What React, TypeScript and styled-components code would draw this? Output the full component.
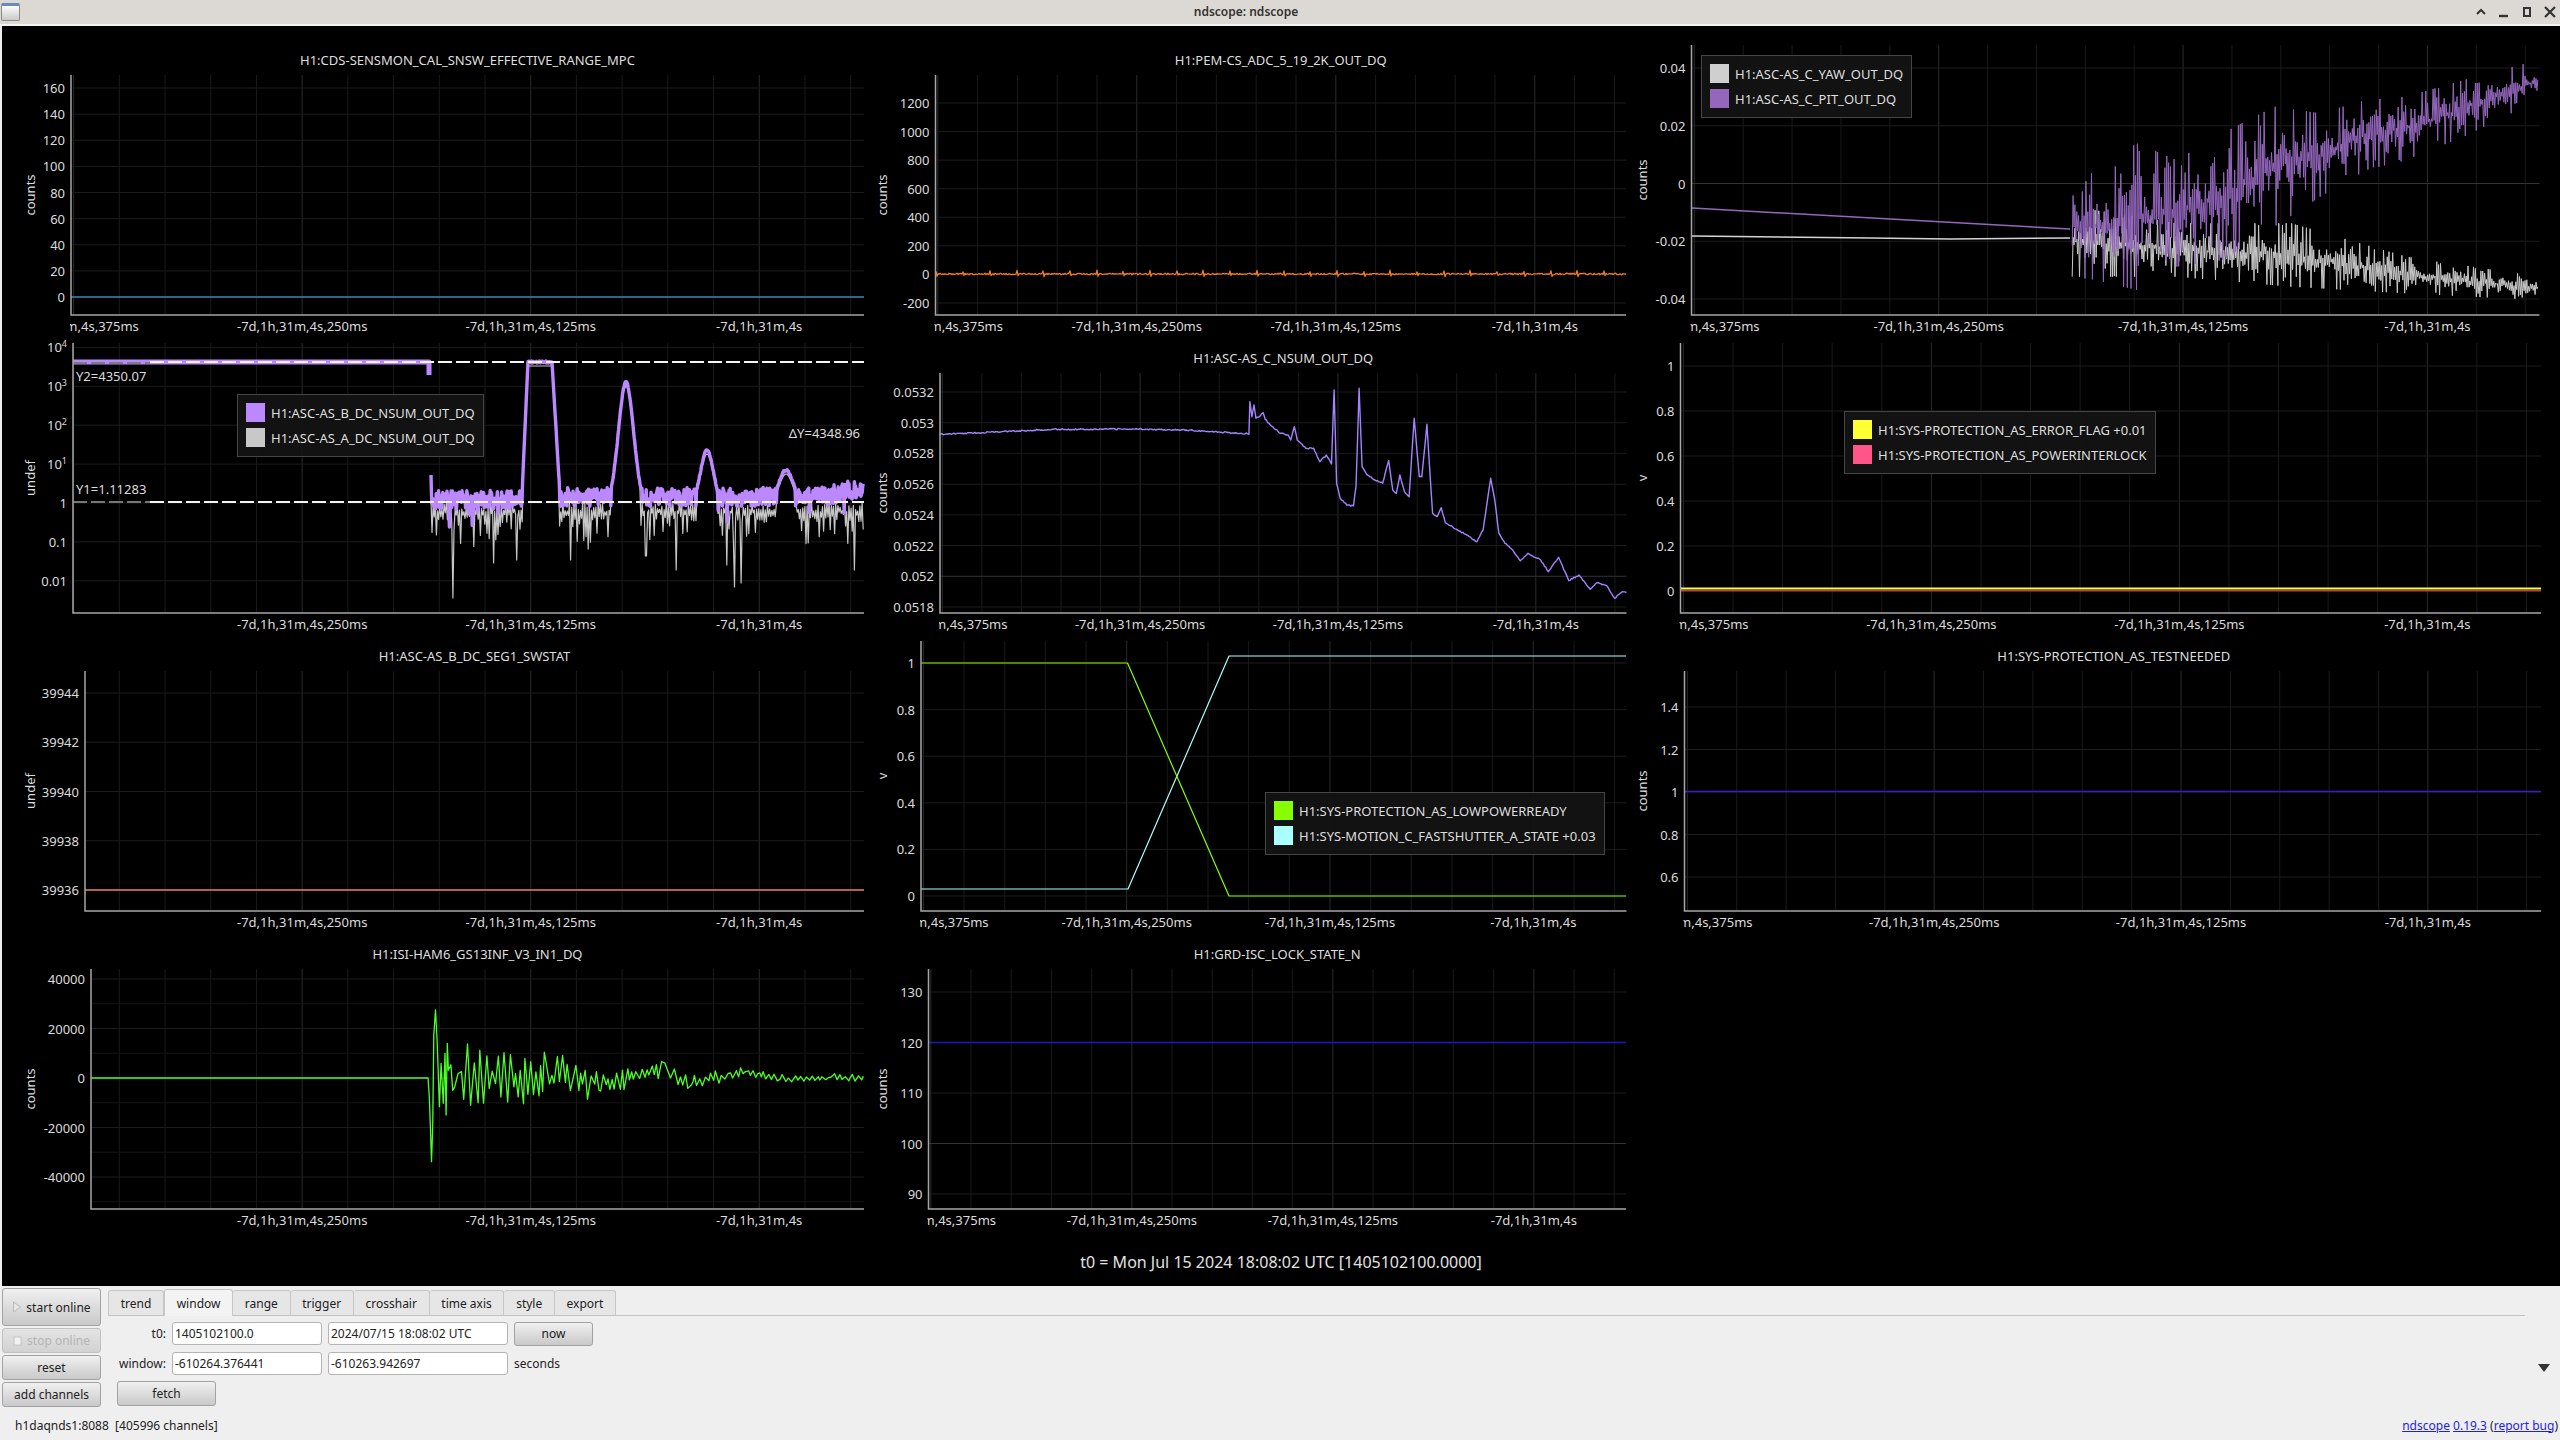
import React from 'react';
import styled, { createGlobalStyle } from 'styled-components';

type Pt = [number, number];

interface Trace {
  d: string;
  color: string;
  width?: number;
  dash?: string;
}

interface LegendDef {
  x: number;
  y: number;
  items: { color: string; label: string }[];
}

interface PlotDef {
  col: number;
  row: number;
  title?: string;
  left: number;
  right: number;
  unit: string;
  yPos: (v: number) => number;
  ticks: { value: number; label: React.ReactNode; accent?: boolean }[];
  minorY?: number[];
  hideFirstLabel?: boolean;
  traces: Trace[];
  legend?: LegendDef;
  notes?: { x: number; y: number; text: string; end?: boolean }[];
}

const COL_X = [2, 877, 1640];
const COL_W = [875, 763, 918];
const UNIT_X = [30, 882, 1642];
const ROW_H = 298;
const GRID_TOP = 40;
const WINDOW_MS = 433.744;

const rng = (seed: number) => () => {
  seed = (seed + 0x6d2b79f5) | 0;
  let t = Math.imul(seed ^ (seed >>> 15), 1 | seed);
  t = (t + Math.imul(t ^ (t >>> 7), 61 | t)) ^ t;
  return ((t ^ (t >>> 14)) >>> 0) / 4294967296;
};

const toPath = (pts: Pt[]) =>
  'M' + pts.map(([x, y]) => `${x.toFixed(1)} ${y.toFixed(1)}`).join('L');

const linear = (v1: number, p1: number, v2: number, p2: number) => (v: number) =>
  p1 + ((v - v1) * (p2 - p1)) / (v2 - v1);

// piecewise interpolation over [x, a, b, ...] rows
const lookup = (table: number[][], x: number, idx: number) => {
  if (x <= table[0][0]) return table[0][idx];
  for (let i = 1; i < table.length; i++) {
    if (x <= table[i][0]) {
      const f = (x - table[i - 1][0]) / (table[i][0] - table[i - 1][0]);
      return table[i - 1][idx] + f * (table[i][idx] - table[i - 1][idx]);
    }
  }
  return table[table.length - 1][idx];
};

const flat = (left: number, right: number, y: number): string => `M${left} ${y}L${right} ${y}`;

const zigzagBand = (seed: number, env: number[][], from: number, to: number, step: number, power: number) => {
  const r = rng(seed);
  const pts: Pt[] = [];
  let sign = 1;
  let burst = 1;
  let n = 0;
  for (let z = from; z <= to; z += step) {
    if (n++ % 6 === 0) burst = 0.35 + 0.65 * r();
    const top = lookup(env, z, 1) / 3;
    const bottom = lookup(env, z, 2) / 3;
    const mid = (top + bottom) / 2;
    const half = (bottom - top) / 2;
    const reach = r() < 0.12 ? 1 : burst * Math.pow(r(), power);
    pts.push([1660 + z / 1.742, mid + sign * half * reach]);
    sign = -sign;
  }
  return toPath(pts);
};

const pitTrace = () => {
  const env = [[720, 520, 830], [760, 520, 840], [830, 430, 870], [900, 480, 800], [980, 400, 780], [1070, 320, 680], [1150, 340, 590], [1230, 300, 510], [1300, 290, 480], [1400, 240, 410], [1530, 180, 300]];
  return zigzagBand(11, env, 718, 1530, 1.6, 1.1);
};

const yawTrace = () => {
  const env = [[720, 620, 830], [900, 670, 830], [1100, 670, 860], [1300, 770, 880], [1530, 830, 900]];
  return zigzagBand(23, env, 718, 1530, 1.6, 1);
};

const pemTrace = (left: number, right: number) => {
  const r = rng(5);
  const pts: Pt[] = [];
  for (let x = left; x <= right; x += 1) {
    const phase = (x - left) % 26.7;
    const spike = phase < 1 ? -3 : phase < 2 ? 2 : 0;
    pts.push([x, 274 + (r() - 0.5) * 1.6 + spike]);
  }
  return toPath(pts);
};

// peaks of the arm-power transient, in screen pixels; 999 away from a peak
const peakY = (x: number) => {
  const trapezoid = x < 522 || x > 560 ? 999 : x < 528 ? 495 - ((x - 522) / 6) * 133 : x > 552 ? 362 + ((x - 552) / 8) * 133 : 362;
  const bell = (c: number, w: number, top: number) => 505 - (505 - top) * Math.exp(-((x - c) ** 2) / (2 * w * w));
  const y = Math.min(trapezoid, bell(626, 7.5, 382), bell(707, 6.5, 450), bell(786, 7.5, 470));
  return y > 488 ? 999 : y;
};

const bPower = () => {
  const r = rng(31);
  const pts: Pt[] = [[431, 475], [431.5, 495]];
  for (let x = 432; x <= 864; x += 0.6) {
    const base = x > 820 ? 497 - ((x - 820) / 44) * 10 : x < 520 ? 500 : 497;
    let y = base + (r() - 0.5) * 19;
    if (x < 500 && r() < 0.07) y += 10 + r() * 26;
    else if (r() < 0.025) y += 8 + r() * 16;
    pts.push([x, Math.min(y, peakY(x) + (r() - 0.5) * 2)]);
  }
  return toPath(pts);
};

const aPower = () => {
  const r = rng(47);
  const deep: Pt[] = [[453, 598], [494, 563], [517, 560], [571, 560], [676, 570], [735, 587], [741, 583], [854, 570], [646, 556], [727, 565]];
  const pts: Pt[] = [[431, 500]];
  let sign = 1;
  for (let x = 432; x <= 864; x += 1.1) {
    const hit = deep.find(([dx]) => Math.abs(dx - x) < 0.6);
    let y = 512 + sign * 10 * r();
    if (sign > 0 && r() < 0.45) y += r() * 30;
    if (hit) y = hit[1];
    sign = -sign;
    pts.push([x, Math.min(y, peakY(x) + 4)]);
  }
  return toPath(pts);
};

const nsumTrace = () => {
  const raw: Pt[] = [[117, 283], [200, 278], [290, 271], [350, 268], [500, 267], [600, 270], [720, 281], [723, 283], [725, 185], [729, 230], [733, 195], [737, 235], [745, 228], [751, 218], [755, 238], [765, 255], [785, 280], [800, 285], [805, 300], [812, 260], [818, 300], [835, 325], [850, 325], [862, 365], [875, 345], [885, 372], [890, 150], [895, 430], [902, 475], [915, 495], [928, 498], [933, 440], [939, 145], [945, 380], [955, 405], [970, 420], [985, 430], [997, 362], [1005, 450], [1012, 460], [1019, 405], [1028, 455], [1037, 470], [1047, 235], [1057, 410], [1062, 410], [1072, 253], [1083, 520], [1092, 530], [1100, 503], [1108, 548], [1130, 568], [1150, 585], [1170, 605], [1182, 570], [1197, 415], [1205, 480], [1213, 580], [1225, 610], [1240, 630], [1255, 662], [1270, 640], [1295, 660], [1310, 695], [1330, 652], [1350, 722], [1370, 705], [1392, 748], [1405, 728], [1425, 738], [1440, 775], [1455, 755], [1463, 758]];
  const r = rng(7);
  const pts: Pt[] = [];
  raw.forEach(([zx, zy], i) => {
    const x = 880 + zx / 1.96;
    const y = 340 + zy / 3;
    if (i > 0) {
      const [px, py] = [880 + raw[i - 1][0] / 1.96, 340 + raw[i - 1][1] / 3];
      const n = Math.floor((x - px) / 1.2);
      for (let k = 1; k < n; k++) {
        pts.push([px + ((x - px) * k) / n, py + ((y - py) * k) / n + (r() - 0.5) * 1.3]);
      }
    }
    pts.push([x, y]);
  });
  return toPath(pts);
};

const seismicTrace = () => {
  const r = rng(91);
  const amp = [[785, 120], [900, 110], [1000, 75], [1100, 38], [1180, 32], [1300, 22], [1540, 17]];
  const centre = [[785, 415], [1000, 415], [1100, 425], [1170, 385], [1230, 430], [1320, 398], [1400, 418], [1540, 415]];
  const pts: Pt[] = [[91, 1078], [428, 1078]];
  const head: Pt[] = [[765, 470], [767, 560], [769, 665], [771, 560], [773, 285], [776, 210], [779, 300], [783, 500], [786, 370], [790, 490], [793, 340], [795, 525], [797, 310]];
  head.forEach(([zx, zy]) => pts.push([zx / 1.782, 940 + zy / 3]));
  let sign = -1;
  let z = 799;
  while (z <= 1540) {
    const y = lookup(centre, z, 1) + sign * lookup(amp, z, 1) * (0.1 + 0.95 * r() * Math.sqrt(r()));
    pts.push([z / 1.782, 940 + y / 3]);
    sign = r() < 0.85 ? -sign : sign;
    z += 2.5 + r() * 4.5;
  }
  return toPath(pts);
};

const logY = (v: number) => 503 - Math.log10(v) * 38.9;

const Pow10: React.FC<{ exp: number }> = ({ exp }) => (
  <>
    10
    <tspan dy="-4" fontSize="9">{exp}</tspan>
  </>
);

const numTicks = (values: number[], accent?: number) =>
  values.map((value) => ({ value, label: String(value), accent: value === accent }));

const PLOTS: PlotDef[] = [
  {
    col: 0, row: 0, title: 'H1:CDS-SENSMON_CAL_SNSW_EFFECTIVE_RANGE_MPC', left: 71, right: 864, unit: 'counts',
    yPos: linear(160, 88, 0, 297),
    ticks: numTicks([160, 140, 120, 100, 80, 60, 40, 20, 0]),
    traces: [{ d: flat(71, 864, 297), color: '#3f80b8', width: 1.3 }],
  },
  {
    col: 1, row: 0, title: 'H1:PEM-CS_ADC_5_19_2K_OUT_DQ', left: 935.5, right: 1626, unit: 'counts',
    yPos: linear(1200, 103, -200, 303),
    ticks: numTicks([1200, 1000, 800, 600, 400, 200, 0, -200]),
    traces: [{ d: pemTrace(936, 1626), color: '#ff7f0e', width: 1.2 }],
  },
  {
    col: 2, row: 0, left: 1691.5, right: 2539.5, unit: 'counts',
    yPos: linear(0.04, 68, -0.04, 299),
    ticks: numTicks([0.04, 0.02, 0, -0.02, -0.04], 0),
    traces: [
      { d: toPath([[1692, 236], [1870, 238], [1950, 239], [2070, 238]]), color: '#d4d4d4', width: 1.5 },
      { d: yawTrace(), color: '#c9c9c9', width: 1 },
      { d: toPath([[1692, 208], [2070, 229]]), color: '#9467bd', width: 1.5 },
      { d: pitTrace(), color: '#9467bd', width: 1 },
    ],
    legend: {
      x: 1701, y: 55,
      items: [
        { color: '#cfcfcf', label: 'H1:ASC-AS_C_YAW_OUT_DQ' },
        { color: '#9467bd', label: 'H1:ASC-AS_C_PIT_OUT_DQ' },
      ],
    },
  },
  {
    col: 0, row: 1, left: 73, right: 864, unit: 'undef', hideFirstLabel: true,
    yPos: logY,
    ticks: [
      { value: 10000, label: <Pow10 exp={4} /> },
      { value: 1000, label: <Pow10 exp={3} /> },
      { value: 100, label: <Pow10 exp={2} /> },
      { value: 10, label: <Pow10 exp={1} /> },
      { value: 1, label: '1' },
      { value: 0.1, label: '0.1' },
      { value: 0.01, label: '0.01' },
    ],
    traces: [
      { d: aPower(), color: '#c6c6c6', width: 1.2 },
      { d: toPath([[73, 362], [429, 362], [429, 375]]), color: '#bb88ff', width: 5 },
      { d: bPower(), color: '#bb88ff', width: 3.4 },
      { d: flat(73, 150, 363), color: '#7d7a80', width: 2, dash: '14 4' },
      { d: flat(150, 864, 362), color: '#f4f4f4', width: 2, dash: '14 4' },
      { d: flat(73, 150, 502), color: '#77757a', width: 2, dash: '14 4' },
      { d: flat(150, 864, 502), color: '#f4f4f4', width: 2, dash: '14 4' },
    ],
    legend: {
      x: 237, y: 394,
      items: [
        { color: '#bb88ff', label: 'H1:ASC-AS_B_DC_NSUM_OUT_DQ' },
        { color: '#c8c8c8', label: 'H1:ASC-AS_A_DC_NSUM_OUT_DQ' },
      ],
    },
    notes: [
      { x: 76, y: 376, text: 'Y2=4350.07' },
      { x: 76, y: 489, text: 'Y1=1.11283' },
      { x: 860, y: 433, text: '\u0394Y=4348.96', end: true },
    ],
  },
  {
    col: 1, row: 1, title: 'H1:ASC-AS_C_NSUM_OUT_DQ', left: 940, right: 1626.5, unit: 'counts',
    yPos: linear(0.0532, 392, 0.0518, 607),
    ticks: numTicks([0.0532, 0.053, 0.0528, 0.0526, 0.0524, 0.0522, 0.052, 0.0518], 0.052),
    traces: [{ d: nsumTrace(), color: '#a583ff', width: 1.4 }],
  },
  {
    col: 2, row: 1, left: 1680.5, right: 2541, unit: 'v',
    yPos: linear(1, 366, 0, 591),
    ticks: numTicks([1, 0.8, 0.6, 0.4, 0.2, 0]),
    traces: [
      { d: flat(1681, 2541, 590.8), color: '#ff5588', width: 1 },
      { d: flat(1681, 2541, 588.6), color: '#ffff33', width: 2 },
    ],
    legend: {
      x: 1844, y: 411,
      items: [
        { color: '#ffff33', label: 'H1:SYS-PROTECTION_AS_ERROR_FLAG +0.01' },
        { color: '#ff5588', label: 'H1:SYS-PROTECTION_AS_POWERINTERLOCK' },
      ],
    },
  },
  {
    col: 0, row: 2, title: 'H1:ASC-AS_B_DC_SEG1_SWSTAT', left: 85, right: 864, unit: 'undef', hideFirstLabel: true,
    yPos: linear(39944, 693, 39936, 890),
    ticks: numTicks([39944, 39942, 39940, 39938, 39936]),
    traces: [{ d: flat(85, 864, 890), color: '#e8805c', width: 1.4 }],
  },
  {
    col: 1, row: 2, left: 921, right: 1626.5, unit: 'v',
    yPos: linear(1, 663, 0, 896),
    ticks: numTicks([1, 0.8, 0.6, 0.4, 0.2, 0]),
    traces: [
      { d: toPath([[921, 889], [1128, 889], [1229, 656], [1626, 656]]), color: '#aaffff', width: 1.2 },
      { d: toPath([[921, 663], [1127.5, 663], [1229, 896], [1626, 896]]), color: '#88ff00', width: 1.2 },
    ],
    legend: {
      x: 1265, y: 792,
      items: [
        { color: '#88ff00', label: 'H1:SYS-PROTECTION_AS_LOWPOWERREADY' },
        { color: '#aaffff', label: 'H1:SYS-MOTION_C_FASTSHUTTER_A_STATE +0.03' },
      ],
    },
  },
  {
    col: 2, row: 2, title: 'H1:SYS-PROTECTION_AS_TESTNEEDED', left: 1684.5, right: 2541, unit: 'counts',
    yPos: linear(1.4, 707, 0.6, 877),
    ticks: numTicks([1.4, 1.2, 1, 0.8, 0.6]),
    traces: [{ d: flat(1685, 2541, 791.5), color: '#3a20c4', width: 1.3 }],
  },
  {
    col: 0, row: 3, title: 'H1:ISI-HAM6_GS13INF_V3_IN1_DQ', left: 91, right: 864, unit: 'counts', hideFirstLabel: true,
    yPos: linear(40000, 979, -40000, 1177),
    ticks: numTicks([40000, 20000, 0, -20000, -40000]),
    minorY: [30000, 10000, -10000, -30000, -50000],
    traces: [{ d: seismicTrace(), color: '#4cff26', width: 1.3 }],
  },
  {
    col: 1, row: 3, title: 'H1:GRD-ISC_LOCK_STATE_N', left: 928.5, right: 1626, unit: 'counts',
    yPos: linear(130, 992, 90, 1194),
    ticks: numTicks([130, 120, 110, 100, 90], 100),
    traces: [{ d: flat(929, 1626, 1042.5), color: '#1a1ac8', width: 1.5 }],
  },
];

const GlobalStyle = createGlobalStyle`
  html, body {
    margin: 0;
    padding: 0;
    background: #efefef;
  }
  #root {
    width: 2560px;
    height: 1440px;
  }
`;

const Window = styled.div`
  width: 2560px;
  height: 1440px;
  overflow: hidden;
  display: flex;
  flex-direction: column;
  background: #efefef;
  font-family: 'Noto Sans', sans-serif;
  color: #222;
`;

const TitleBar = styled.div`
  height: 24px;
  flex: none;
  display: flex;
  align-items: center;
  background: #dcd9d5;
  border-bottom: 2px solid #f4f4f4;
  box-sizing: content-box;
`;

const AppIcon = styled.div`
  width: 19px;
  height: 18px;
  margin-left: 1px;
  box-sizing: border-box;
  border: 1px solid #8a8a8a;
  border-top: 3px solid #6a8ab8;
  border-radius: 2px;
  background: linear-gradient(#fdfdfd, #c9c9c9);
`;

const WindowTitle = styled.div`
  flex: 1;
  padding: 0 2px 2px 0;
  text-align: center;
  font-size: 12px;
  font-weight: 600;
  color: #333;
`;

const WindowButtons = styled.div`
  display: flex;
  align-items: center;
  gap: 9px;
  padding-right: 3px;
  svg {
    display: block;
  }
`;

const Scope = styled.div`
  flex: none;
  height: 1260px;
  margin-left: 2px;
  box-sizing: border-box;
  padding-top: 14px;
  background: #000;
  display: flex;
  flex-direction: column;
`;

const PlotGrid = styled.div`
  display: grid;
  grid-template-columns: 875px 763px 920px;
  grid-auto-rows: ${ROW_H}px;
`;

const PlotCell = styled.section`
  position: relative;
  display: flex;
  flex-direction: column;
  padding-top: 5px;
  box-sizing: border-box;
  min-width: 0;
`;

const PlotTitle = styled.div<{ $padLeft: number; $padRight: number }>`
  height: 30px;
  flex: none;
  padding: 0 ${({ $padRight }) => $padRight}px 0 ${({ $padLeft }) => $padLeft}px;
  line-height: 30px;
  text-align: center;
  font-size: 13px;
  color: #dedede;
  white-space: nowrap;
`;

const ChartSvg = styled.svg`
  display: block;
  flex: none;
  overflow: visible;
  text {
    font-family: 'Noto Sans', sans-serif;
    font-size: 13px;
    fill: #dcdcdc;
    dominant-baseline: central;
  }
`;

const Legend = styled.div<{ $x: number; $y: number }>`
  position: absolute;
  left: ${({ $x }) => $x}px;
  top: ${({ $y }) => $y}px;
  display: flex;
  flex-direction: column;
  gap: 6px;
  padding: 8px 8px 9px;
  background: rgba(20, 20, 20, 0.92);
  border: 1px solid #454545;
`;

const LegendRow = styled.div`
  display: flex;
  align-items: center;
  gap: 6px;
  height: 19px;
  font-size: 13px;
  color: #dedede;
  white-space: nowrap;
`;

const Swatch = styled.span<{ $color: string }>`
  width: 19px;
  height: 19px;
  flex: none;
  background: ${({ $color }) => $color};
`;

const TimeLabel = styled.div`
  padding-top: 18px;
  text-align: center;
  font-size: 16px;
  line-height: 24px;
  color: #e2e2e2;
`;

const Panel = styled.div`
  flex: 1;
  display: flex;
  flex-direction: column;
  min-height: 0;
  font-size: 12px;
`;

const Controls = styled.div`
  display: flex;
  padding: 2px 0 0 2px;
  height: 126px;
  box-sizing: border-box;
`;

const SideButtons = styled.div`
  width: 99px;
  flex: none;
  display: flex;
  flex-direction: column;
  gap: 2px;
  margin-right: 7px;
`;

const Button = styled.button<{ $height?: number }>`
  height: ${({ $height }) => $height ?? 25}px;
  padding: 0;
  display: flex;
  align-items: center;
  justify-content: center;
  gap: 4px;
  font-family: inherit;
  font-size: 12px;
  color: #222;
  background: linear-gradient(#f0f0f0, #c9c9c9);
  border: 1px solid #a2a2a2;
  border-radius: 3px;
  &:disabled {
    color: #b4b4b4;
    background: linear-gradient(#e4e4e4, #d2d2d2);
    border-color: #c0c0c0;
  }
`;

const TabPane = styled.div`
  width: 2417px;
  flex: none;
`;

const TabBar = styled.div`
  display: flex;
  height: 27px;
  align-items: flex-end;
  border-bottom: 1px solid #c2c2c2;
`;

const Tab = styled.div<{ $active?: boolean }>`
  height: ${({ $active }) => ($active ? 27 : 25)}px;
  box-sizing: border-box;
  margin-bottom: ${({ $active }) => ($active ? -1 : 0)}px;
  padding: 0 11.7px;
  display: flex;
  align-items: center;
  font-size: 12px;
  border: 1px solid #c6c6c6;
  border-left-width: ${({ $active }) => ($active ? 1 : 0)}px;
  border-bottom: none;
  border-radius: 3px 3px 0 0;
  background: ${({ $active }) => ($active ? '#f3f3f3' : '#e6e6e6')};
  &:first-child {
    border-left-width: 1px;
  }
`;

const FormGrid = styled.div`
  display: grid;
  grid-template-columns: 58px 150px 180px 79px auto;
  grid-auto-rows: 23px;
  justify-content: start;
  align-items: center;
  column-gap: 6px;
  row-gap: 7px;
  padding-top: 6px;
`;

const FieldLabel = styled.label`
  text-align: right;
`;

const Field = styled.input`
  height: 23px;
  box-sizing: border-box;
  padding: 0 2px;
  font-family: inherit;
  font-size: 12px;
  color: #222;
  background: #fff;
  border: 1px solid #b4b4b4;
  border-radius: 3px;
  outline: none;
`;

const FetchButton = styled(Button)`
  grid-column: 1 / span 2;
  width: 99px;
  margin-left: 9px;
`;

const ArrowSlot = styled.div`
  flex: 1;
  display: flex;
  justify-content: flex-end;
  padding: 76px 10px 0 0;
`;

const DownArrow = styled.div`
  width: 0;
  height: 0;
  border-left: 6px solid transparent;
  border-right: 6px solid transparent;
  border-top: 8px solid #333;
`;

const StatusBar = styled.div`
  display: flex;
  justify-content: space-between;
  align-items: center;
  height: 24px;
  margin-top: 1px;
  padding: 0 2px 0 15px;
  font-size: 12px;
`;

const VersionLink = styled.a`
  color: #1d1dee;
  text-decoration: underline;
`;

const MS_GRID = Array.from({ length: 18 }, (_, i) => 1.441 + i * 25);
const X_LABELS = ['-7d,1h,31m,4s,375ms', '-7d,1h,31m,4s,250ms', '-7d,1h,31m,4s,125ms', '-7d,1h,31m,4s'];

const Plot: React.FC<{ def: PlotDef; id: number }> = ({ def, id }) => {
  const { col, row, left, right, title, yPos, ticks } = def;
  const cellX = COL_X[col];
  const cellY = GRID_TOP + ROW_H * row;
  const top = cellY + 5 + (title ? 30 : 0);
  const bottom = cellY + 275;
  const width = COL_W[col];
  const height = cellY + ROW_H - top;
  // the first column keeps one time scale whatever its axis width is
  const originX = col === 0 ? 71 : left;
  const xAt = (ms: number) => originX + (ms * (right - originX)) / WINDOW_MS;
  const clip = `plot-clip-${id}`;

  return (
    <PlotCell>
      {title && (
        <PlotTitle $padLeft={left - cellX} $padRight={cellX + width - right}>
          {title}
        </PlotTitle>
      )}
      <ChartSvg width={width} height={height} viewBox={`${cellX} ${top} ${width} ${height}`}>
        <defs>
          <clipPath id={clip}>
            <rect x={left - 1} y={top} width={right - left + 40} height={height} />
          </clipPath>
        </defs>
        <text
          x={UNIT_X[col]}
          y={(top + bottom) / 2}
          textAnchor="middle"
          transform={`rotate(-90 ${UNIT_X[col]} ${(top + bottom) / 2})`}
        >
          {def.unit}
        </text>
        {MS_GRID.map((ms, i) =>
          xAt(ms) < left ? null : (
            <line
              key={ms}
              x1={xAt(ms)}
              x2={xAt(ms)}
              y1={top}
              y2={bottom}
              stroke={i % 5 === 0 ? '#2b2b2b' : '#1a1a1a'}
            />
          ),
        )}
        {def.minorY?.map((v) => (
          <line key={v} x1={left} x2={right} y1={yPos(v)} y2={yPos(v)} stroke="#141414" />
        ))}
        {ticks.map((t) => (
          <line
            key={t.value}
            x1={left}
            x2={right}
            y1={yPos(t.value)}
            y2={yPos(t.value)}
            stroke={t.accent ? '#333' : '#1c1c1c'}
          />
        ))}
        {ticks.map((t) => (
          <text key={t.value} x={left - 6} y={yPos(t.value)} textAnchor="end">
            {t.label}
          </text>
        ))}
        <g clipPath={`url(#${clip})`}>
          {X_LABELS.map((label, i) =>
            i === 0 && def.hideFirstLabel ? null : (
              <text key={label} x={xAt(1.441 + 125 * i)} y={bottom + 11} textAnchor="middle">
                {label}
              </text>
            ),
          )}
        </g>
        {def.traces.map((tr, i) => (
          <path
            key={i}
            d={tr.d}
            fill="none"
            stroke={tr.color}
            strokeWidth={tr.width ?? 1}
            strokeDasharray={tr.dash}
            strokeLinejoin="round"
          />
        ))}
        <path
          d={`M${left} ${top}L${left} ${bottom}L${right} ${bottom}`}
          fill="none"
          stroke="#a6a6a6"
          strokeWidth={1.5}
        />
        {def.notes?.map((n) => (
          <text key={n.text} x={n.x} y={n.y} textAnchor={n.end ? 'end' : 'start'}>
            {n.text}
          </text>
        ))}
      </ChartSvg>
      {def.legend && (
        <Legend $x={def.legend.x - cellX} $y={def.legend.y - cellY}>
          {def.legend.items.map((item) => (
            <LegendRow key={item.label}>
              <Swatch $color={item.color} />
              {item.label}
            </LegendRow>
          ))}
        </Legend>
      )}
    </PlotCell>
  );
};

const App: React.FC = () => (
  <>
    <GlobalStyle />
    <Window>
      <TitleBar>
        <AppIcon />
        <WindowTitle>ndscope: ndscope</WindowTitle>
        <WindowButtons>
          <svg width="14" height="12" viewBox="0 0 14 12">
            <path d="M3 8l4-4 4 4" fill="none" stroke="#333" strokeWidth="2" />
          </svg>
          <svg width="14" height="12" viewBox="0 0 14 12">
            <path d="M2 10h9" fill="none" stroke="#333" strokeWidth="2.4" />
          </svg>
          <svg width="14" height="12" viewBox="0 0 14 12">
            <rect x="4" y="2" width="6" height="8" fill="none" stroke="#333" strokeWidth="2" />
          </svg>
          <svg width="14" height="12" viewBox="0 0 14 12">
            <path d="M2 1l10 10M12 1L2 11" fill="none" stroke="#333" strokeWidth="2.2" />
          </svg>
        </WindowButtons>
      </TitleBar>
      <Scope>
        <PlotGrid>
          {PLOTS.map((def, i) => (
            <Plot key={i} def={def} id={i} />
          ))}
        </PlotGrid>
        <TimeLabel>t0 = Mon Jul 15 2024 18:08:02 UTC [1405102100.0000]</TimeLabel>
      </Scope>
      <Panel>
        <Controls>
          <SideButtons>
            <Button $height={38}>
              <svg width="10" height="14" viewBox="0 0 10 14">
                <path d="M1.5 2l7 5-7 5z" fill="#e6e6e6" stroke="#b8b8b8" />
              </svg>
              start online
            </Button>
            <Button disabled>
              <svg width="10" height="12" viewBox="0 0 10 12">
                <rect x="1" y="2" width="7" height="8" fill="#f2f2f2" stroke="#c4c4c4" />
              </svg>
              stop online
            </Button>
            <Button>reset</Button>
            <Button>add channels</Button>
          </SideButtons>
          <TabPane>
            <TabBar>
              <Tab>trend</Tab>
              <Tab $active>window</Tab>
              <Tab>range</Tab>
              <Tab>trigger</Tab>
              <Tab>crosshair</Tab>
              <Tab>time axis</Tab>
              <Tab>style</Tab>
              <Tab>export</Tab>
            </TabBar>
            <FormGrid>
              <FieldLabel>t0:</FieldLabel>
              <Field readOnly value="1405102100.0" />
              <Field readOnly value="2024/07/15 18:08:02 UTC" />
              <Button $height={24}>now</Button>
              <span />
              <FieldLabel>window:</FieldLabel>
              <Field readOnly value="-610264.376441" />
              <Field readOnly value="-610263.942697" />
              <span>seconds</span>
              <span />
              <FetchButton>fetch</FetchButton>
            </FormGrid>
          </TabPane>
          <ArrowSlot>
            <DownArrow />
          </ArrowSlot>
        </Controls>
        <StatusBar>
          <span>h1daqnds1:8088&nbsp; [405996 channels]</span>
          <span>
            <VersionLink href="#">ndscope</VersionLink> <VersionLink href="#">0.19.3</VersionLink> (
            <VersionLink href="#">report bug</VersionLink>)
          </span>
        </StatusBar>
      </Panel>
    </Window>
  </>
);

export default App;
